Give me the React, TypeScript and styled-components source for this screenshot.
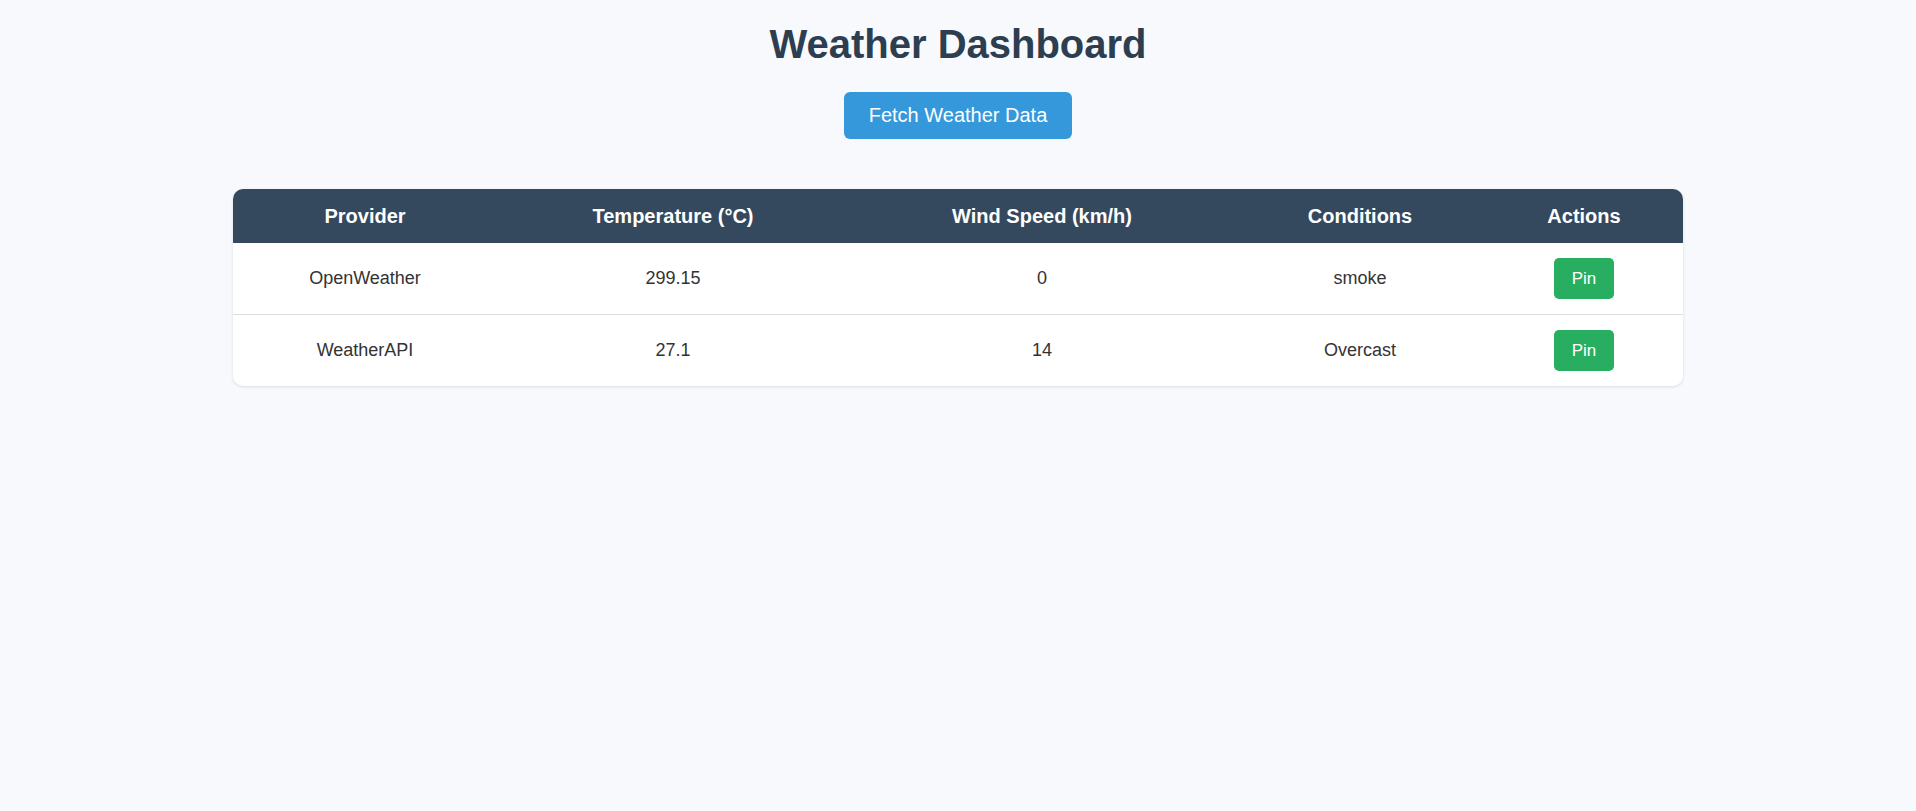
import * as React from 'react';
import styled, { createGlobalStyle } from 'styled-components';

const GlobalStyle = createGlobalStyle`
  html, body {
    margin: 0;
    padding: 0;
    background: #f7f9fc;
    font-family: "Liberation Sans", Arial, sans-serif;
    color: #333;
  }
`;

const Page = styled.div`
  max-width: 1500px;
  margin: 0 auto;
  padding: 21px 25px 25px;
  box-sizing: border-box;
  display: flex;
  flex-direction: column;
  align-items: center;
`;

const Title = styled.h1`
  margin: 0 0 25px;
  font-size: 40px;
  line-height: 46px;
  font-weight: 700;
  color: #2c3e50;
`;

const FetchButton = styled.button`
  font-family: inherit;
  font-size: 20px;
  line-height: 23px;
  padding: 12px 25px;
  color: #fff;
  background: #3498db;
  border: none;
  border-radius: 6px;
  cursor: pointer;
`;

const Table = styled.table`
  margin-top: 50px;
  width: 100%;
  border-collapse: collapse;
  table-layout: fixed;
  background: #fff;
  border-radius: 10px;
  overflow: hidden;
  box-shadow: 0 1px 3px rgba(0, 0, 0, 0.12);
`;

const Col = styled.col<{ $w: number }>`
  width: ${p => p.$w}px;
`;

const HeadCell = styled.th`
  padding: 15px;
  font-size: 20px;
  line-height: 24px;
  font-weight: 700;
  color: #fff;
  background: #34495e;
  text-align: center;
`;

const Row = styled.tr`
  border-bottom: 1px solid #ddd;
  &:last-child {
    border-bottom: none;
  }
`;

const Cell = styled.td`
  padding: 15px;
  font-size: 18px;
  line-height: 21px;
  text-align: center;
  color: #333;
`;

const PinButton = styled.button`
  font-family: inherit;
  font-size: 17px;
  line-height: 21px;
  padding: 10px 18px;
  vertical-align: middle;
  color: #fff;
  background: #27ae60;
  border: none;
  border-radius: 5px;
  cursor: pointer;
`;

const widths = [264, 352, 386, 250, 198];

const rows = [
  { provider: 'OpenWeather', temp: '299.15', wind: '0', cond: 'smoke' },
  { provider: 'WeatherAPI', temp: '27.1', wind: '14', cond: 'Overcast' },
];

export default function App() {
  return (
    <>
      <GlobalStyle />
      <Page>
        <Title>Weather Dashboard</Title>
        <FetchButton>Fetch Weather Data</FetchButton>
        <Table>
          <colgroup>
            {widths.map((w, i) => (
              <Col key={i} $w={w} />
            ))}
          </colgroup>
          <thead>
            <tr>
              <HeadCell>Provider</HeadCell>
              <HeadCell>Temperature (°C)</HeadCell>
              <HeadCell>Wind Speed (km/h)</HeadCell>
              <HeadCell>Conditions</HeadCell>
              <HeadCell>Actions</HeadCell>
            </tr>
          </thead>
          <tbody>
            {rows.map(r => (
              <Row key={r.provider}>
                <Cell>{r.provider}</Cell>
                <Cell>{r.temp}</Cell>
                <Cell>{r.wind}</Cell>
                <Cell>{r.cond}</Cell>
                <Cell>
                  <PinButton>Pin</PinButton>
                </Cell>
              </Row>
            ))}
          </tbody>
        </Table>
      </Page>
    </>
  );
}
